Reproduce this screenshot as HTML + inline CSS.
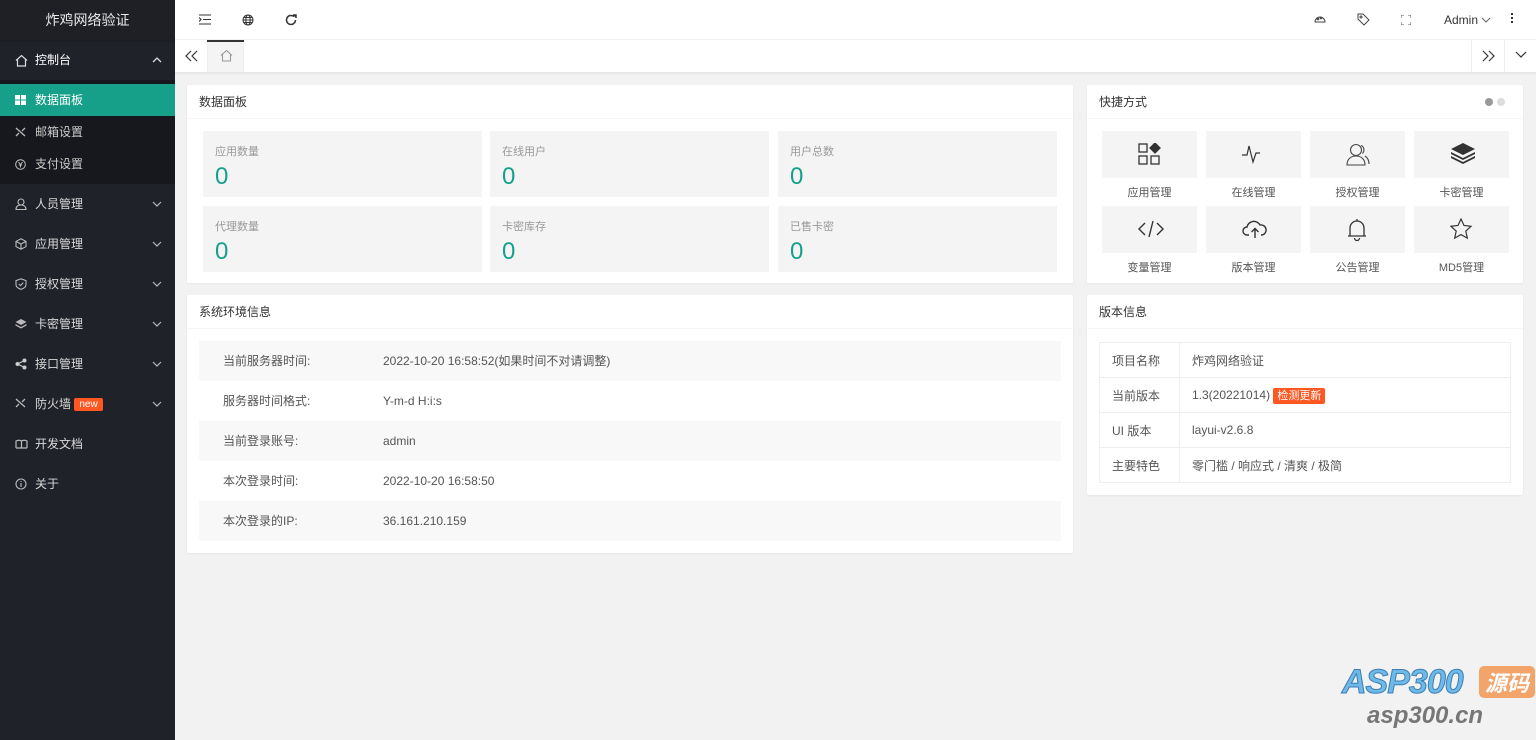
<!DOCTYPE html>
<html><head><meta charset="utf-8"><style>
*{margin:0;padding:0;box-sizing:border-box}
body{width:1536px;height:740px;overflow:hidden;background:#f2f2f2;font-family:"Liberation Sans","Noto Sans CJK SC",sans-serif;font-size:12px;color:#333;position:relative}
.side{position:absolute;left:0;top:0;width:175px;height:740px;background:#20222a;color:#c2c2c2}
.logo{height:40px;line-height:40px;text-align:center;color:#e8e8e8;font-size:14px;background:#1e2026;box-shadow:0 1px 2px rgba(0,0,0,.2)}
.mi{position:absolute;left:0;width:175px;height:40px;line-height:40px;padding-left:35px;color:#d9d9d9}
.mi svg{position:absolute;left:15px;top:14px}
.mi svg.arr{left:auto;right:12px;top:14px}
.sub{position:absolute;top:80px;left:0;width:175px;height:104px;background:#17181d}
.si{position:absolute;left:0;width:175px;height:32px;line-height:32px;padding-left:35px;color:#ccc}
.si.act{background:#16a08a;color:#fff}
.si svg{position:absolute;left:15px;top:11px}
.hdr{position:absolute;left:175px;top:0;right:0;height:40px;background:#fff;border-bottom:1px solid #f0f0f0}
.tabs{position:absolute;left:175px;top:40px;right:0;height:33px;background:#fff;border-bottom:1px solid #e6e6e6;box-shadow:0 1px 2px rgba(0,0,0,.05)}
.card{position:absolute;background:#fff;border-radius:2px;box-shadow:0 1px 2px rgba(0,0,0,.05)}
.ch{height:34px;line-height:34px;padding-left:12px;border-bottom:1px solid #f6f6f6;color:#333}
.stat{position:absolute;background:#f4f4f4;width:279px;height:66px;padding:12px 12px}
.stat .l{color:#999;font-size:11px}
.stat .n{color:#16a08a;font-size:24px;margin-top:5px;line-height:26px}
.row{position:absolute;left:12px;right:12px;height:40px;line-height:40px}
.row .a{position:absolute;left:24px;color:#555}
.row .b{position:absolute;left:184px;color:#555}
.sc{position:absolute;width:95px;height:47px;background:#f4f4f4}
.sc svg{position:absolute;left:36px;top:12px}
.sl{position:absolute;width:95px;text-align:center;color:#555;font-size:11px}
table{position:absolute;left:12px;top:47px;width:412px;border-collapse:collapse}
td{border:1px solid #eee;height:35px;padding-left:12px;color:#555}
</style></head><body>
<div class="side">
<div class="logo">炸鸡网络验证</div>
<div class="mi" style="top:40px;color:#fff"><svg width="13" height="13" viewBox="0 0 13 13" fill="none" stroke="#ddd" stroke-width="1.2"><path d="M1 6.5L6.5 1.5 12 6.5M2.5 5v7h8V5"/></svg>控制台<svg class="arr" width="12" height="12" viewBox="0 0 12 12" fill="none" stroke="#ddd" stroke-width="1.3"><path d="M2 8l4-4 4 4"/></svg></div>
<div class="sub">
<div class="si act" style="top:4px"><svg width="11" height="10"><rect x="0" y="0" width="5" height="4.5" fill="#fff"/><rect x="6" y="0" width="5" height="4.5" fill="#fff"/><rect x="0" y="5.5" width="5" height="4.5" fill="#fff"/><rect x="6" y="5.5" width="5" height="4.5" fill="#fff"/></svg>数据面板</div>
<div class="si" style="top:36px"><svg width="11" height="10" fill="none" stroke="#bbb" stroke-width="1.3"><path d="M1 1l9 8M1 9l3-3M7 4l3-3"/></svg>邮箱设置</div>
<div class="si" style="top:68px"><svg width="11" height="11" fill="none" stroke="#bbb"><circle cx="5.5" cy="5.5" r="4.8"/><path d="M3.5 3l2 2.5 2-2.5M5.5 5.5v3M3.8 6h3.4"/></svg>支付设置</div>
</div>
<div class="mi" style="top:184px"><svg width="12" height="12" fill="none" stroke="#bbb" stroke-width="1.1"><circle cx="6" cy="4" r="3"/><path d="M1 11.5c0-3 2-4.5 5-4.5s5 1.5 5 4.5z"/></svg>人员管理<svg class="arr" width="12" height="12" fill="none" stroke="#bbb" stroke-width="1.2"><path d="M2 4l4 4 4-4"/></svg></div>
<div class="mi" style="top:224px"><svg width="12" height="12" fill="none" stroke="#bbb" stroke-width="1.1"><path d="M6 .8l5 2.6v5.2L6 11.2 1 8.6V3.4zM1 3.4l5 2.6 5-2.6M6 6v5.2"/></svg>应用管理<svg class="arr" width="12" height="12" fill="none" stroke="#bbb" stroke-width="1.2"><path d="M2 4l4 4 4-4"/></svg></div>
<div class="mi" style="top:264px"><svg width="12" height="12" fill="none" stroke="#bbb" stroke-width="1.1"><path d="M6 .8l5 1.8v4C11 9 8.5 10.5 6 11.3 3.5 10.5 1 9 1 6.6v-4zM3.8 6l1.7 1.6L8.3 4.6"/></svg>授权管理<svg class="arr" width="12" height="12" fill="none" stroke="#bbb" stroke-width="1.2"><path d="M2 4l4 4 4-4"/></svg></div>
<div class="mi" style="top:304px"><svg width="12" height="12" fill="#bbb"><path d="M6 1l5.5 3L6 7 .5 4z"/><path d="M.5 6L6 9l5.5-3v1.5L6 10.5.5 7.5z"/></svg>卡密管理<svg class="arr" width="12" height="12" fill="none" stroke="#bbb" stroke-width="1.2"><path d="M2 4l4 4 4-4"/></svg></div>
<div class="mi" style="top:344px"><svg width="12" height="12" fill="#ccc"><circle cx="2.5" cy="6" r="2"/><circle cx="9.5" cy="2.5" r="2"/><circle cx="9.5" cy="9.5" r="2"/><path d="M2.5 6L9.5 2.5M2.5 6l7 3.5" stroke="#ccc" stroke-width="1.2"/></svg>接口管理<svg class="arr" width="12" height="12" fill="none" stroke="#bbb" stroke-width="1.2"><path d="M2 4l4 4 4-4"/></svg></div>
<div class="mi" style="top:384px"><svg width="11" height="10" fill="none" stroke="#bbb" stroke-width="1.3"><path d="M1 1l9 8M1 9l3-3M7 4l3-3"/></svg>防火墙 <span style="background:#ff5722;color:#fff;font-size:10px;padding:1px 5px;border-radius:2px;position:relative;top:-1px">new</span><svg class="arr" width="12" height="12" fill="none" stroke="#bbb" stroke-width="1.2"><path d="M2 4l4 4 4-4"/></svg></div>
<div class="mi" style="top:424px"><svg width="13" height="12" fill="none" stroke="#bbb" stroke-width="1.2"><path d="M1 10V3c2-1 4-1 5.5 0 1.5-1 3.5-1 5.5 0v7M6.5 3v7M1 10h11"/></svg>开发文档</div>
<div class="mi" style="top:464px"><svg width="12" height="12" fill="none" stroke="#bbb" stroke-width="1.1"><circle cx="6" cy="6" r="5"/><path d="M6 5v4M6 3v1"/></svg>关于</div>
</div>

<div class="hdr">
<svg style="position:absolute;left:24px;top:14px" width="12" height="11" fill="none" stroke="#333" stroke-width="1.1"><path d="M0 1h12M4 5.5h8M0 10h12M0 3.5l2 2-2 2"/></svg>
<svg style="position:absolute;left:67px;top:14px" width="12" height="12" fill="none" stroke="#333" stroke-width="1"><circle cx="6" cy="6" r="5"/><ellipse cx="6" cy="6" rx="2.2" ry="5"/><path d="M1 6h10M2 3.5h8M2 8.5h8"/></svg>
<svg style="position:absolute;left:110px;top:14px" width="12" height="12" fill="none" stroke="#333" stroke-width="1.5"><path d="M10.5 6A4.5 4.5 0 1 1 9 2.6"/><path d="M8 1h3v3" fill="#333"/></svg>
<svg style="position:absolute;left:1139px;top:14px" width="12" height="11" fill="none" stroke="#444" stroke-width="1"><path d="M1 8a5 5 0 1 1 10 0z"/><circle cx="4" cy="5" r=".8"/><circle cx="7" cy="4" r=".8"/></svg>
<svg style="position:absolute;left:1182px;top:13px" width="13" height="13" fill="none" stroke="#444" stroke-width="1"><path d="M1 1h5l6 6-5 5-6-6z"/><circle cx="4" cy="4" r="1"/></svg>
<svg style="position:absolute;left:1226px;top:15px" width="10" height="10" fill="none" stroke="#666" stroke-width="1"><path d="M0 3V0h3M7 0h3v3M10 7v3H7M3 10H0V7"/></svg>
<div style="position:absolute;left:1269px;top:13px;font-size:12px;color:#333">Admin <svg width="10" height="8" fill="none" stroke="#666"><path d="M1 2l4 4 4-4"/></svg></div>
<div style="position:absolute;left:1336px;top:13px;width:2px;"><div style="width:2px;height:2px;background:#333;margin-bottom:2px"></div><div style="width:2px;height:2px;background:#333;margin-bottom:2px"></div><div style="width:2px;height:2px;background:#333"></div></div>
</div>
<div class="tabs">
<svg style="position:absolute;left:10px;top:10px" width="13" height="12" fill="none" stroke="#333" stroke-width="1.2"><path d="M6 1L1 6l5 5M12 1L7 6l5 5"/></svg>
<div style="position:absolute;left:32px;top:0;width:37px;height:32px;background:#f4f4f4;border-left:1px solid #eee;border-right:1px solid #eee"><div style="position:absolute;left:-1px;top:0;width:37px;height:2px;background:#333"></div><svg style="position:absolute;left:12px;top:9px" width="13" height="13" fill="none" stroke="#999" stroke-width="1.1"><path d="M1 6.5L6.5 1.5 12 6.5M2.5 5v7h8V5"/></svg></div>
<div style="position:absolute;right:32px;top:0;width:33px;height:32px;border-left:1px solid #eee"><svg style="position:absolute;left:10px;top:10px" width="13" height="12" fill="none" stroke="#333" stroke-width="1.2"><path d="M1 1l5 5-5 5M7 1l5 5-5 5"/></svg></div>
<div style="position:absolute;right:0;top:0;width:32px;height:32px;border-left:1px solid #eee"><svg style="position:absolute;left:10px;top:11px" width="12" height="8" fill="none" stroke="#333" stroke-width="1.2"><path d="M1 1l5 5 5-5"/></svg></div>
</div>

<div class="card" style="left:187px;top:85px;width:886px;height:198px">
<div class="ch">数据面板</div>
<div class="stat" style="left:16px;top:46px"><div class="l">应用数量</div><div class="n">0</div></div>
<div class="stat" style="left:303px;top:46px"><div class="l">在线用户</div><div class="n">0</div></div>
<div class="stat" style="left:591px;top:46px"><div class="l">用户总数</div><div class="n">0</div></div>
<div class="stat" style="left:16px;top:121px"><div class="l">代理数量</div><div class="n">0</div></div>
<div class="stat" style="left:303px;top:121px"><div class="l">卡密库存</div><div class="n">0</div></div>
<div class="stat" style="left:591px;top:121px"><div class="l">已售卡密</div><div class="n">0</div></div>
</div>

<div class="card" style="left:187px;top:295px;width:886px;height:258px">
<div class="ch">系统环境信息</div>
<div class="row" style="top:46px;background:#f8f8f8"><span class="a">当前服务器时间:</span><span class="b">2022-10-20 16:58:52(如果时间不对请调整)</span></div>
<div class="row" style="top:86px"><span class="a">服务器时间格式:</span><span class="b">Y-m-d H:i:s</span></div>
<div class="row" style="top:126px;background:#f8f8f8"><span class="a">当前登录账号:</span><span class="b">admin</span></div>
<div class="row" style="top:166px"><span class="a">本次登录时间:</span><span class="b">2022-10-20 16:58:50</span></div>
<div class="row" style="top:206px;background:#f8f8f8"><span class="a">本次登录的IP:</span><span class="b">36.161.210.159</span></div>
</div>

<div class="card" style="left:1087px;top:85px;width:436px;height:198px">
<div class="ch">快捷方式</div>
<div style="position:absolute;right:30px;top:13px;width:8px;height:8px;border-radius:50%;background:#999"></div>
<div style="position:absolute;right:18px;top:13px;width:8px;height:8px;border-radius:50%;background:#ddd"></div>
<div class="sc" style="left:15px;top:46px"><svg width="24" height="22" fill="none" stroke="#333" stroke-width="1.3"><rect x="1" y="1" width="8" height="8"/><rect x="1" y="13" width="8" height="8"/><rect x="13" y="13" width="8" height="8"/><path d="M17 0l5 5-5 5-5-5z" fill="#333"/></svg></div>
<div class="sc" style="left:119px;top:46px"><svg width="24" height="22" fill="none" stroke="#333" stroke-width="1.2"><path d="M0 12h5l2-9 4 16 3-9h4"/></svg></div>
<div class="sc" style="left:223px;top:46px"><svg width="26" height="24" fill="none" stroke="#444" stroke-width="1.1"><circle cx="10" cy="7" r="5.5"/><path d="M1 22c0-6 4-9 9-9s9 3 9 9z"/><path d="M15 2.5c3 1 4 5 1.5 8M19 13c3 2 4 5 4 8"/></svg></div>
<div class="sc" style="left:327px;top:46px"><svg width="26" height="22" fill="#333"><path d="M13 0l12 6-12 6L1 6z"/><path d="M1 9l12 6 12-6v2L13 17 1 11z"/><path d="M1 13l12 6 12-6v2L13 21 1 15z"/></svg></div>
<div class="sl" style="left:15px;top:99px">应用管理</div>
<div class="sl" style="left:119px;top:99px">在线管理</div>
<div class="sl" style="left:223px;top:99px">授权管理</div>
<div class="sl" style="left:327px;top:99px">卡密管理</div>
<div class="sc" style="left:15px;top:121px"><svg width="26" height="22" fill="none" stroke="#333" stroke-width="1.4"><path d="M7 5L1 11l6 6M19 5l6 6-6 6M15 3l-4 16"/></svg></div>
<div class="sc" style="left:119px;top:121px"><svg width="26" height="22" fill="none" stroke="#333" stroke-width="1.4"><path d="M7 17H5a4 4 0 0 1 0-8 7 7 0 0 1 13-2 5 5 0 0 1 2 10h-1M13 20v-9M9.5 14l3.5-3.5 3.5 3.5"/></svg></div>
<div class="sc" style="left:223px;top:121px"><svg width="26" height="24" fill="none" stroke="#333" stroke-width="1.3"><path d="M4 18V10a7 7 0 0 1 14 0v8M2 18h18M11 1v2M8.5 20a2.5 2.5 0 0 0 5 0"/></svg></div>
<div class="sc" style="left:327px;top:121px"><svg width="26" height="24" fill="none" stroke="#333" stroke-width="1.2"><path d="M11 1l3 6.5 7 .8-5.2 4.8 1.5 7L11 16.6 4.7 20.1l1.5-7L1 8.3l7-.8z"/></svg></div>
<div class="sl" style="left:15px;top:174px">变量管理</div>
<div class="sl" style="left:119px;top:174px">版本管理</div>
<div class="sl" style="left:223px;top:174px">公告管理</div>
<div class="sl" style="left:327px;top:174px">MD5管理</div>
</div>

<div class="card" style="left:1087px;top:295px;width:436px;height:200px">
<div class="ch">版本信息</div>
<table>
<tr><td style="width:80px">项目名称</td><td>炸鸡网络验证</td></tr>
<tr><td>当前版本</td><td>1.3(20221014) <span style="background:#ff5722;color:#fff;font-size:11px;padding:2px 4px;border-radius:2px">检测更新</span></td></tr>
<tr><td>UI 版本</td><td>layui-v2.6.8</td></tr>
<tr><td>主要特色</td><td>零门槛 / 响应式 / 清爽 / 极简</td></tr>
</table>
</div>

<div style="position:absolute;left:1342px;top:663px;font:italic bold 34px 'Liberation Sans',sans-serif;color:#6fb9e6;-webkit-text-stroke:1px #3a7fb5;letter-spacing:-1px">ASP300</div>
<div style="position:absolute;left:1479px;top:666px;width:56px;height:32px;background:#f2a46b;border-radius:5px;color:#fff;font:italic bold 22px 'Noto Sans CJK SC',sans-serif;text-align:center;line-height:32px">源码</div>
<div style="position:absolute;left:1367px;top:702px;font:italic bold 24px 'Liberation Sans',sans-serif;color:#777">asp300.cn</div>
</body></html>
